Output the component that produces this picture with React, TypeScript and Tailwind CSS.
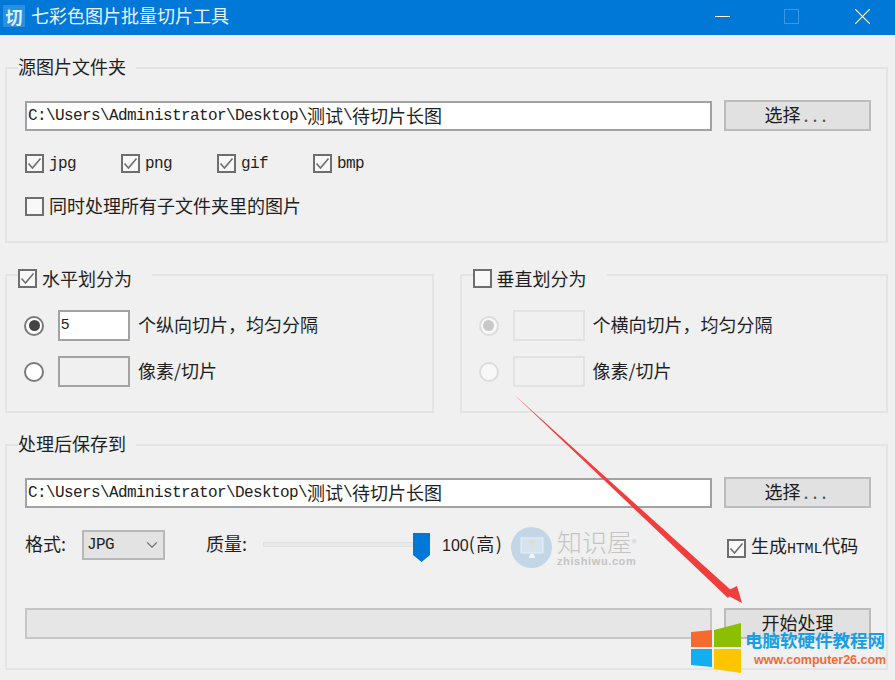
import { ChevronDown } from "lucide-react";
import type { ReactNode } from "react";

const cjk = "font-['Noto_Sans_CJK_SC','Liberation_Sans',sans-serif]";
const mono = "font-['Liberation_Mono','Noto_Sans_CJK_SC',monospace]";

function Check({ checked }: { checked?: boolean }) {
  return (
    <span className="flex h-[19px] w-[19px] shrink-0 items-center justify-center border-2 border-[#6e6e6e] bg-[#f8f8f8]">
      {checked && (
        <svg width="15" height="15" viewBox="0 0 15 15" fill="none">
          <path d="M1.5 7.5 L5.5 12 L13.5 2.5" stroke="#6f6f6f" strokeWidth="1.6" />
        </svg>
      )}
    </span>
  );
}

function Radio({ on, disabled }: { on?: boolean; disabled?: boolean }) {
  return (
    <span
      className={`flex h-5 w-5 shrink-0 items-center justify-center rounded-full border-2 ${
        disabled ? "border-[#dcdcdc] bg-[#f8f8f8]" : "border-[#7a7a7a] bg-white"
      }`}
    >
      {on && <span className={`h-[11px] w-[11px] rounded-full ${disabled ? "bg-[#c8c8c8]" : "bg-[#444444]"}`} />}
    </span>
  );
}

function Btn({ children }: { children: ReactNode }) {
  return (
    <button className="h-[31px] w-[147px] shrink-0 border-2 border-[#bcbcbc] bg-[#e1e1e1] pb-[3px] text-[18px] leading-none text-[#1c1c1c]">
      {children}
    </button>
  );
}

function PathRow() {
  return (
    <div className="flex items-end gap-3">
      <div className="flex h-[30px] flex-1 items-center border-2 border-[#a2a2a2] bg-white pl-[1px] text-[18px] leading-none text-[#222222]">
        <span className={`${mono} text-[16px] tracking-[-0.6px]`}>{"C:\\Users\\Administrator\\Desktop\\"}</span>
        <span className="pb-[2px]">测试</span>
        <span className={`${mono} text-[16px] tracking-[-0.6px]`}>{"\\"}</span>
        <span className="pb-[2px]">待切片长图</span>
      </div>
      <Btn>
        选择<span className="ml-[3px] tracking-[4px] text-[#555555]">...</span>
      </Btn>
    </div>
  );
}

function Box({ value, disabled }: { value?: string; disabled?: boolean }) {
  return (
    <div
      className={`flex h-[31px] w-[72px] shrink-0 items-center border-2 pb-[3px] pl-[1px] font-['Liberation_Sans',sans-serif] text-[15px] text-[#222222] ${
        disabled ? "border-[#e2e2e2] bg-[#f0f0f0]" : value ? "border-[#a2a2a2] bg-white" : "border-[#a2a2a2] bg-[#f0f0f0]"
      }`}
    >
      {value}
    </div>
  );
}

function SplitGroup({
  title,
  checked,
  first,
  disabled,
  value,
  className,
}: {
  title: string;
  checked?: boolean;
  first: string;
  disabled?: boolean;
  value?: string;
  className: string;
}) {
  return (
    <div className={`h-[139px] border-2 border-[#e4e4e4] ${className}`}>
      <div className="-mt-[10px] ml-[11px] flex h-6 w-[134px] items-center gap-[5px] bg-[#f0f0f0] text-[18px] leading-none">
        <Check checked={checked} />
        <span className="pb-[1px]">{title}</span>
      </div>
      <div className="mt-5 flex h-[31px] items-center pl-[17px]">
        <Radio on disabled={disabled} />
        <span className="ml-[14px]">
          <Box value={value} disabled={disabled} />
        </span>
        <span className="ml-[8px] pb-[3px] text-[18px] leading-none">{first}</span>
      </div>
      <div className="mt-[15px] flex h-[31px] items-center pl-[17px]">
        <Radio disabled={disabled} />
        <span className="ml-[14px]">
          <Box disabled={disabled} />
        </span>
        <span className="ml-[8px] pb-[3px] text-[18px] leading-none">像素/切片</span>
      </div>
    </div>
  );
}

function Legend({ children, width }: { children: string; width: string }) {
  return <div className={`-mt-[13px] ml-[11px] h-6 bg-[#f0f0f0] text-[18px] leading-5 ${width}`}>{children}</div>;
}

export default function App() {
  return (
    <div className={`relative flex h-[680px] w-[895px] flex-col overflow-hidden bg-[#f0f0f0] text-[#1f1f1f] ${cjk}`}>
      {/* title bar */}
      <div className="flex h-[35px] shrink-0 items-center bg-[#0078d7] pb-[3px] text-white">
        <span className="ml-[3px] flex h-[22px] w-[22px] items-center justify-center bg-[#2b8fe0] text-[17px] font-bold leading-none text-[#dcefff]">
          切
        </span>
        <span className="ml-[6px] pb-[3px] text-[18px] leading-none text-[#eaf4fc]">七彩色图片批量切片工具</span>
        <div className="ml-auto flex items-center pr-[25px]">
          <svg width="15" height="15" viewBox="0 0 15 15" className="mr-[54px]">
            <path d="M0 7.5 H15" stroke="#fff" strokeWidth="1" />
          </svg>
          <svg width="15" height="15" viewBox="0 0 15 15" className="mr-[56px]">
            <rect x="0.5" y="0.5" width="14" height="14" fill="none" stroke="#3a97e2" />
          </svg>
          <svg width="15" height="15" viewBox="0 0 15 15">
            <path d="M0 0 L15 15 M15 0 L0 15" stroke="#fff" strokeWidth="1.1" />
          </svg>
        </div>
      </div>

      <div className="flex flex-col gap-[31px] pl-[5px] pr-[7px] pt-8">
        {/* source folder */}
        <div className="h-[176px] border-2 border-[#e4e4e4]">
          <Legend width="w-[118px]">源图片文件夹</Legend>
          <div className="mt-5 pl-[18px] pr-[15px]">
            <PathRow />
            <div className="mt-[23px] flex h-[19px]">
              {["jpg", "png", "gif", "bmp"].map((ext) => (
                <div key={ext} className="flex w-24 items-center gap-[5px]">
                  <Check checked />
                  <span className={`${mono} text-[16px] leading-none tracking-[-0.6px]`}>{ext}</span>
                </div>
              ))}
            </div>
            <div className="mt-6 flex h-[19px] items-center gap-[5px] text-[18px] leading-none">
              <Check />
              <span className="pb-[3px]">同时处理所有子文件夹里的图片</span>
            </div>
          </div>
        </div>

        {/* split options */}
        <div className="flex gap-[26px]">
          <SplitGroup title="水平划分为" checked first={"个纵向切片\uFF0C均匀分隔"} value="5" className="w-[429px]" />
          <SplitGroup title="垂直划分为" first={"个横向切片\uFF0C均匀分隔"} disabled className="w-[429px]" />
        </div>

        {/* output */}
        <div className="h-[226px] border-2 border-[#e4e4e4]">
          <Legend width="w-[118px]">处理后保存到</Legend>
          <div className="mt-[20px] pl-[18px] pr-[15px]">
            <PathRow />
            <div className="mt-[22px] flex h-8 items-start text-[18px] leading-none">
              <span className="mt-1 w-[57px]">格式:</span>
              <div className={`flex h-[30px] w-[83px] items-center justify-between border-2 border-[#b8b8b8] bg-[#e3e3e3] pl-[3px] pr-[2px] ${mono} text-[16px]`}>
                <span className="tracking-[-0.6px]">JPG</span>
                <ChevronDown size={18} strokeWidth={1.5} className="text-[#777777]" />
              </div>
              <span className="ml-[41px] mt-1 w-[57px]">质量:</span>
              <div className="relative h-8 w-[167px]">
                <div className="mt-3 h-[5px] w-[155px] border border-[#e0e0e0] bg-[#e9e9e9]" />
                <svg width="17" height="29" viewBox="0 0 17 29" className="absolute right-0 top-[3px]">
                  <path d="M0 0 H17 V22 L8.5 29 L0 22 Z" fill="#0078d7" />
                </svg>
              </div>
              <span className="ml-3 mt-1 w-[180px] whitespace-nowrap">
                <span className="font-['Liberation_Sans',sans-serif] text-[16px]">100</span>
                <span className="tracking-[1.5px]">(高)</span>
              </span>
              <div className="ml-[105px] mt-[6px] flex items-center gap-[5px]">
                <Check checked />
                <span className="whitespace-nowrap pb-[3px]">
                  生成<span className={`${mono} text-[15px] tracking-[-0.2px]`}>HTML</span>代码
                </span>
              </div>
            </div>
            <div className="mt-[46px] flex gap-3">
              <div className="h-[31px] flex-1 border-2 border-[#c6c6c6] bg-[#e6e6e6]" />
              <Btn>开始处理</Btn>
            </div>
          </div>
        </div>
      </div>

      {/* red arrow annotation */}
      <svg width="895" height="680" viewBox="0 0 895 680" className="pointer-events-none absolute left-0 top-0">
        <path d="M513.5 394 L733 592 L728 598 Z" fill="#f23d3d" />
        <path d="M742 603 L723 593 L737 586 Z" fill="#f23d3d" />
      </svg>

      {/* zhishiwu watermark */}
      <div className="absolute left-[511px] top-[527px] flex items-start">
        <span className="flex h-[41px] w-[41px] items-center justify-center rounded-full bg-[#c3d6e6]">
          <svg width="26" height="26" viewBox="0 0 26 26">
            <rect x="2" y="3" width="22" height="15" fill="#d4e3ef" stroke="#e8f0f6" />
            <path d="M11 19 H15 L16 23 H10 Z" fill="#eef4f8" />
            <path d="M10.5 8 Q13 5.5 15.5 8 Q15.5 10 13 11 V13 M13 14.5 V15.5" fill="none" stroke="#e6dfa8" strokeWidth="1.3" />
          </svg>
        </span>
        <div className="ml-[5px] flex flex-col text-[#c4c4c4]">
          <span className="whitespace-nowrap font-['Noto_Sans_CJK_SC',serif] text-[25px] font-light leading-[28px]">
            知识屋<sup className="text-[10px] leading-none">®</sup>
          </span>
          <span className="font-['Liberation_Sans',sans-serif] text-[11px] font-bold leading-3 tracking-[0.6px]">zhishiwu.com</span>
        </div>
      </div>

      {/* site logo */}
      <div className="absolute left-[691px] top-[623px] flex">
        <svg width="50" height="50" viewBox="0 0 50 50">
          <path d="M0 9 L21 7 V24 H0 Z" fill="#f66a2c" />
          <path d="M23 7 L50 0 V24 H23 Z" fill="#8cbf00" />
          <path d="M0 26 H21 V44 L0 42 Z" fill="#12aef0" />
          <path d="M23 26 H50 V50 L23 46 Z" fill="#ffc400" />
        </svg>
        <div className="ml-1 flex flex-col">
          <span className="mt-[5px] whitespace-nowrap text-[17.5px] font-bold leading-6 text-[#169fe6]">电脑软硬件教程网</span>
          <span className="ml-[9px] whitespace-nowrap font-['Liberation_Sans',sans-serif] text-[12.5px] font-bold leading-4 text-[#f26a35]">
            www.computer26.com
          </span>
        </div>
      </div>
    </div>
  );
}
